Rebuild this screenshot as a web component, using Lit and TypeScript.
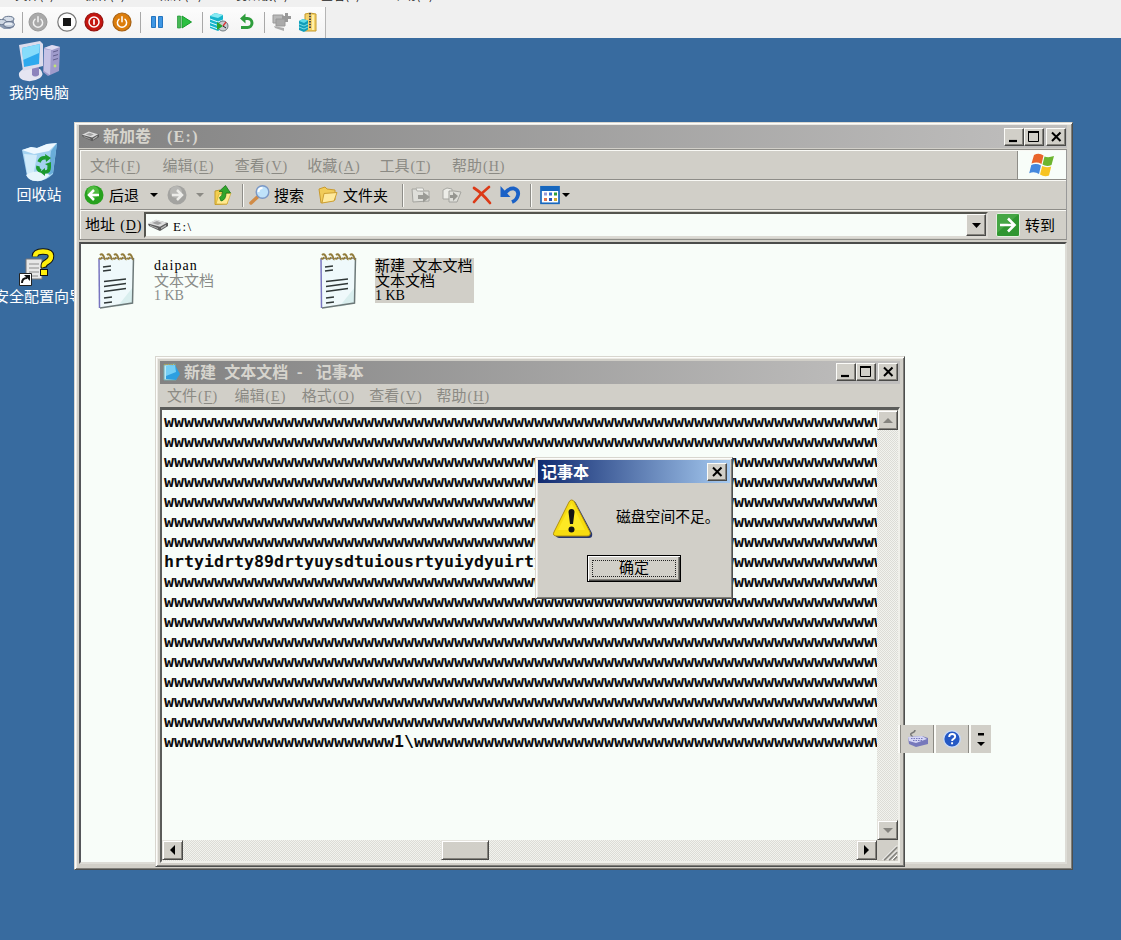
import { LitElement, html, css, svg, TemplateResult } from "lit";
import { customElement, property } from "lit/decorators.js";

const face = css`
  * { box-sizing: border-box; }
  :host { font-family: "Noto Sans CJK SC", sans-serif; font-size: 15px; line-height: 15px; color: #000; }
  svg { display: block; flex: none; overflow: visible; }
  .m { font-family: "Liberation Serif", serif; font-size: 14px; line-height: 1; }
  u { text-decoration-thickness: 1px; text-underline-offset: 2px; }
`;

const icon = (w: number, h: number, body: TemplateResult, cls = "") =>
  html`<svg class=${cls} width=${w} height=${h} viewBox="0 0 ${w} ${h}">${body}</svg>`;

const power = svg`<path d="M7 7.2a4.6 4.6 0 1 0 6 0M10 4.8v5" fill="none" stroke="#fff" stroke-width="1.5" stroke-linecap="round"/>`;

const hostIcons = {
  disks: icon(15, 20, svg`<path d="M1 8l4-3 6-1 3 2v9l-4 2H4l-5-3V9z" fill="#8a99b0"/><ellipse cx="8.500" cy="7" rx="5.500" ry="2.700" fill="#d5dde8" stroke="#6d7b92"/><ellipse cx="1.500" cy="10" rx="5" ry="2.500" fill="#cfd8e4" stroke="#6d7b92"/><ellipse cx="9" cy="12.500" rx="5.500" ry="3" fill="#c3cedd" stroke="#66738c"/><path d="M5 12h7" stroke="#f3f6fa" stroke-width="1.500"/>`),
  off: icon(20, 20, svg`<circle cx="10" cy="10" r="9" fill="#a9a9a9" stroke="#999"/><g opacity=".85">${power}</g>`),
  stop: icon(20, 20, svg`<circle cx="10" cy="10" r="9.2" fill="#fdfdfd" stroke="#777" stroke-width="1.2"/><rect x="6" y="6" width="8" height="8" fill="#161616"/>`),
  shut: icon(20, 20, svg`<circle cx="10" cy="10" r="9" fill="#c4150f" stroke="#94100c" stroke-width="1.2"/><circle cx="10" cy="10" r="5" fill="none" stroke="#fff" stroke-width="1.5"/><path d="M10 7.3v5.4" stroke="#fff" stroke-width="1.7"/>`),
  save: icon(20, 20, svg`<circle cx="10" cy="10" r="9" fill="#dc7d0b" stroke="#a66012" stroke-width="1.2"/>${power}`),
  pause: icon(12, 14, svg`<path d="M.5 1.500h4v11h-4zM7.500 1.500h4v11h-4z" fill="#3f97e4" stroke="#2475c0"/>`),
  play: icon(16, 14, svg`<path d="M.5 1h3v12h-3z" fill="#46b955" stroke="#1e9433" stroke-width=".7"/><path d="M5 1l9.500 6L5 13z" fill="#2cc042" stroke="#169a2a"/>`),
  snap: icon(20, 20, svg`<path d="M1 4l5-3 8 2v13l-5 3-8-3z" fill="#17b4cb"/><path d="M1 4l5-3 8 2-5 3z" fill="#86eaf3"/><path d="M1 7l8 3 5-2M1 10.500l8 3 5-2M1 14l8 3" stroke="#dffbff" fill="none"/><circle cx="14" cy="14" r="5" fill="#c9cdd0" stroke="#6f7b80"/><path d="M8 10v8l6-4z" fill="#29a52c"/><path d="M14 14l3-4" stroke="#d33" stroke-width="1.300"/><path d="M14 14l3 2" stroke="#222"/>`),
  revert: icon(14, 18, svg`<path d="M3 5.500h4.500a4.500 4.500 0 0 1 0 9H1" fill="none" stroke="#2e9d3c" stroke-width="3"/><path d="M0 5.500L5.500.5v10z" fill="#2e9d3c"/>`),
  grey: icon(20, 20, svg`<path d="M1 3h10v8H1z" fill="#b9b9b9" stroke="#9a9a9a"/><path d="M4 7h9v7H4z" fill="#aaa" stroke="#989898"/><path d="M2 14l10 2v3l-9-3z" fill="#adadad"/><path d="M14.500 1v9M10 5.500h9" stroke="#999" stroke-width="3"/>`),
  zip: icon(18, 20, svg`<path d="M6 2l5-1 6 1v17H6z" fill="#f4d169" stroke="#c49a2c"/><path d="M14 3v15" stroke="#fff0a8" stroke-width="2"/><path d="M11 1v16" stroke="#4b4b4b" stroke-width="2" stroke-dasharray="1.500 1.200"/><path d="M0 9l4-2 5 1.500v9L5 20l-5-2z" fill="#119db8"/><path d="M0 9l4-2 5 1.500L5 11z" fill="#5edbe8"/><path d="M0 12l5 2 4-2M0 15l5 2 4-2" stroke="#8eeaf3" fill="none" stroke-width=".8"/>`),
};

const drive = (w: number) => html`<svg width=${w} height=${w * 0.6} viewBox="0 0 20 12"><path d="M0 5l8-4 12 3v3l-8 5-11-5z" fill="#5c5c5c"/><path d="M0 4.500l8-4 11 3.200-7 4z" fill="#dedede"/><path d="M4 4l5-2 5 2-4 2z" fill="#a1a1a1"/><path d="M13 8.700l5-3v1.500l-5 3z" fill="#bbb"/><path d="M2 6.500l8 3" stroke="#aaa"/></svg>`;

const noteFile = icon(38, 56, svg`<path d="M2 5l35-1-1.500 46L3 55z" fill="#eff9fb"/><path d="M20 54l16-20-.5 16z" fill="#d9eeee"/><path d="M2 5.500L2.500 55" stroke="#7774bf" stroke-width="1.500"/><path d="M2 5.500h34" stroke="#8f93ad"/><path d="M36.500 5l-1 45L3 55" fill="none" stroke="#6c7878" stroke-width="1.500"/><g fill="none" stroke="#927c3a" stroke-width="1.900">${[4, 11, 18, 25, 32].map((x) => svg`<path d="M${x - 1} 2q2-2 3.500 1t1 4M${x - 2} 5q2 2 3-1"/>`)}</g><path d="M6 14l8-1M6 18l8-1M7 28.500l22-2.500M7 33.500l22-3M7 38.500l22-3M7 45l8-1M7 50l8-1" stroke="#2f3737" stroke-width="1.600"/>`);

const desk = {
  pc: icon(42, 42, svg`<path d="M26 7l8-3 8 2-1 24-11 5-5-4z" fill="#9f9bcb"/><path d="M26 7l8-3 8 2-8 3z" fill="#dedcf2"/><path d="M33 9l-1 25-6-4V8z" fill="#c6c3e6"/><path d="M35 11l5-1.500M35 15l5-1.500M35 19l5-1.500" stroke="#63608f"/><circle cx="37" cy="25" r="1.400" fill="#bfe573"/><path d="M1 32q4-6 12-5l9 1q5 5 0 9-8 5-17 2-5-2-4-7z" fill="#e5e5f2"/><path d="M14 25h7v9q-4 3-7 0z" fill="#8d84bd"/><path d="M1 4l21-4 3 3v22L5 30z" fill="#dcdcec"/><path d="M4 7l18-4-1 20-15 3z" fill="#2ea9ee"/><path d="M4 7l18-4-1 9L5 19z" fill="#86dcfb"/>`),
  bin: icon(37, 40, svg`<path d="M1 8l9-3 6 1 10-4 10-1-4 31q-8 8-18 7-6-1-8-5z" fill="#a4d2f0"/><path d="M1 8l9-3 6 1 10-4 10-1-8 8-15 3z" fill="#eef8ff"/><path d="M3 12l13 1-4 22q-5-1-6-4z" fill="#d1ebfa"/><path d="M30 9l-3 25 5-3 4-30z" fill="#69add9"/><path d="M5 33q10-7 24 0-7 7-14 6-7 0-10-6z" fill="#e7f5fc"/><g fill="none" stroke="#1c9a2e" stroke-width="3.500"><path d="M18 20q2-5 7-4"/><path d="M28 24q1 6-4 6"/><path d="M20 29q-4-1-3-5"/></g><path d="M24 12l6 4-5 4zM24 26v8l-5-4zM24 22l6-2 0 6z" fill="#1c9a2e"/>`),
  wiz: icon(36, 38, svg`<path d="M7 11h16v20H7z" fill="#e7e7e7" stroke="#777"/><path d="M10 16h10M10 20h10M10 24h10M10 28h9" stroke="#8d8d8d"/><path d="M16 8.500q0-5 8-5t8 4.500q0 4-4 6T25 20" fill="none" stroke="#111" stroke-width="6.500"/><path d="M21 21h8v7h-8z" fill="#111"/><path d="M16 8.500q0-5 8-5t8 4.500q0 4-4 6T25 19" fill="none" stroke="#ffef0c" stroke-width="4.500"/><path d="M22 22h6v5h-6z" fill="#ffef0c"/><path d="M.5 25.500h12v12H.5z" fill="#fff" stroke="#222"/><path d="M3 35q0-5 5-5" stroke="#111" stroke-width="2" fill="none"/><path d="M5 27h6v6z" fill="#111"/>`),
};

const tool = {
  back: icon(20, 20, svg`<circle cx="10" cy="10" r="9.500" fill="#27a11e"/><circle cx="9" cy="7" r="6" fill="#66c951" opacity=".65"/><path d="M15 10H6M10 5l-5 5 5 5" fill="none" stroke="#fff" stroke-width="2.500"/>`),
  fwd: icon(20, 20, svg`<circle cx="10" cy="10" r="9.500" fill="#a3a3a0"/><circle cx="9" cy="7" r="6" fill="#c1c1be" opacity=".65"/><path d="M5 10h9M10 5l5 5-5 5" fill="none" stroke="#ecece9" stroke-width="2.500"/>`),
  up: icon(18, 20, svg`<path d="M1 6l5-1 2 2h7l-2 12-12 .5z" fill="#f2cf4e" stroke="#c39b2d"/><path d="M2 19L5 9l12-1-4 11z" fill="#ffe98f" stroke="#d4ab34" stroke-width=".7"/><path d="M7 16q5-1 5-8h4.500L11.500.5 5 6.500h3.500q0 5-3 6z" fill="#31a62b" stroke="#197319" stroke-width=".8"/>`),
  search: icon(20, 20, svg`<path d="M1 18l6.500-6" stroke="#d18b46" stroke-width="3.500" stroke-linecap="round"/><circle cx="12.500" cy="7" r="6.300" fill="#bfe2fa" stroke="#7b98c6" stroke-width="1.400"/><path d="M8.500 7q0-4 4-4" stroke="#fff" stroke-width="2" fill="none"/>`),
  folder: icon(20, 18, svg`<path d="M1 3l6-2 2 2 8 1v10L3 17z" fill="#f1cc59" stroke="#c99a2e"/><path d="M4 17L6 7.500l13-1L16 15z" fill="#ffea9d" stroke="#cda033"/>`),
  move: icon(20, 18, svg`<path d="M1 3h6l2 2h9v10L2 16z" fill="#deded9" stroke="#a4a49f"/><path d="M5 2h7l1 3H6z" fill="#f0f0ec" stroke="#b0b0ab"/><path d="M7 9h5V6l7 5-7 5.500V13H7z" fill="#9b9b96"/>`),
  copy: icon(20, 18, svg`<path d="M1 4l4-2 5 1v10H1z" fill="#ededE8" stroke="#a7a7a2"/><path d="M7 5h5l7 1-4 10H7z" fill="#deded9" stroke="#a4a49f"/><path d="M8 9h3V6l5 4-5 5v-3H8z" fill="#969691"/>`),
  del: icon(20, 18, svg`<path d="M2 2q8 5 16 15M17 1Q8 8 2 16" fill="none" stroke="#dc3a17" stroke-width="2.700" stroke-linecap="round"/>`),
  undo: icon(20, 18, svg`<path d="M5 7q4-5 9-4.500 5 1.500 4 6.500-1 5-6 7" fill="none" stroke="#1a61c6" stroke-width="3.800"/><path d="M.5 0v11h10z" fill="#1a61c6"/>`),
  view: icon(20, 18, svg`<rect x="1" y=".8" width="18" height="16.500" fill="#fff" stroke="#1767be" stroke-width="1.700"/><path d="M1 1h18v4H1z" fill="#1767be"/>${["#9a9ad6", "#3572d6", "#31a03a", "#e2744d", "#2752b4", "#d2ac2d"].map((c, i) => svg`<rect x=${4 + (i % 3) * 5} y=${6.5 + Math.floor(i / 3) * 5.5} width="3" height="3" fill=${c}/>`)}`),
  flag: icon(26, 24, svg`<path d="M5 2q5-2.500 9.500.5L12.500 11Q8 8.500 2.500 10.500z" fill="#e9652b"/><path d="M15.500 3.500q4 1.500 9.500-.5L22.500 12q-5 2-9-.5z" fill="#6cb52f"/><path d="M2.300 12q5-2 9.700.5L10 21q-4.500-3-9.800-.8z" fill="#4588dd"/><path d="M13.200 13q4 2 9 .5L20 22.500q-4.500 2-9-1z" fill="#f7c322"/>`),
  go: icon(24, 24, svg`<rect x=".5" y=".5" width="23" height="23" rx="1.500" fill="#2f9630" stroke="#e4efdf"/><path d="M1 1h22L1 20z" fill="#5bb557" opacity=".5"/><path d="M4 12h14M12 5.500l6.500 6.500-6.500 6.500" stroke="#fff" stroke-width="2.600" fill="none"/>`),
  pad: icon(17, 18, svg`<path d="M1 2l11-1 1 16H1z" fill="#b9e9f7" stroke="#7aa"/><path d="M3 3l9-1 5 9-4 6-10-1z" fill="#2d9fe0"/><path d="M3 3l9-1 1 7-10 4z" fill="#75cff5"/><path d="M1 1.500h11" stroke="#b8a04a" stroke-dasharray="1.500 1"/>`),
};

const arrow = (color = "#000", cls = "") => icon(8, 4, svg`<path d="M0 0h8L4 4z" fill=${color}/>`, cls);

/** Caption buttons: minimise, maximise and close. */
@customElement("caption-buttons")
class CaptionButtons extends LitElement {
  @property({ type: Boolean }) only = false;
  static styles = [face, css`
    :host { display: flex; height: 18px; margin-left: auto; }
    .b { width: 20px; height: 18px; background: #d1cfc8; border: 1px solid; border-color: #fbfbf8 #4a4a48 #4a4a48 #fbfbf8; box-shadow: inset -1px -1px #85837d; }
    .c { margin-left: 2px; }
  `];
  render() {
    return html`
      ${this.only ? "" : html`
        <div class="b">${icon(18, 16, svg`<path d="M4 12h8" stroke="#000" stroke-width="2.200"/>`)}</div>
        <div class="b">${icon(18, 16, svg`<path d="M3.500 3h10v9.500h-10z" fill="none" stroke="#000"/><path d="M3 3h11" stroke="#000" stroke-width="2"/>`)}</div>`}
      <div class="b ${this.only ? "" : "c"}">${icon(18, 16, svg`<path d="M5 3.500l8.500 8.500M13.500 3.500L5 12" stroke="#000" stroke-width="2"/>`)}</div>`;
  }
}

const frame = css`
  .win { background: #d1cfc8; border: 1px solid; border-color: #d8d6cf #4d4f4e #4d4f4e #d8d6cf; box-shadow: inset 1px 1px #fdfdfb, inset -1px -1px #7f7e79, inset 2px 2px #eceae4; display: flex; flex-direction: column; }
  .title { display: flex; align-items: center; flex: none; font-weight: 700; font-size: 16px; color: #d6d4cd; background: linear-gradient(90deg, #828282, #c0bfbe); white-space: pre; }
  .title > span { margin-top: -1px; }
  .title .m { font-size: 16px; letter-spacing: 1.300px; }
  .menu { display: flex; align-items: center; color: #8b8a84; white-space: pre; }
  .menu span { flex: none; }
  .menu .m { margin-left: 1px; letter-spacing: 1px; }
`;

const menuItem = ([t, k]: string[]) => html`<span class="mi">${t}<span class="m">(<u>${k}</u>)</span></span>`;

@customElement("explorer-window")
class ExplorerWindow extends LitElement {
  static styles = [face, frame, css`
    :host { display: block; }
    .win { width: 999px; height: 748px; padding: 2px 5px 5px 4px; }
    .title { height: 23px; padding: 0 1px 0 3px; }
    .title svg { margin-right: 4px; }
    .bars { flex: none; height: 91px; margin-top: 1px; border: 1px solid #8e8d88; border-right-color: #999; display: flex; flex-direction: column; }
    .row { display: flex; align-items: center; border-top: 1px solid #f9f9f5; border-bottom: 1px solid #8e8d88; border-left: 1px solid #f9f9f5; flex: none; }
    .menu { height: 30px; padding-left: 9px; }
    .menu .mi { width: 72.4px; }
    .logo { margin-left: auto; width: 49px; height: 28px; background: #f8fdf9; border-left: 1px solid #8e8d88; display: flex; align-items: center; justify-content: center; }
    .tools { height: 30px; padding-left: 3px; }
    .tools > * { flex: none; }
    .t { margin-top: -2px; margin-left: 5px; }
    .sep { width: 2px; height: 23px; border-left: 1px solid #8e8d88; border-right: 1px solid #f9f9f5; }
    .g4 { margin-left: 4px; } .g6 { margin-left: 6px; } .g7 { margin-left: 7px; } .g8 { margin-left: 8px; } .g10 { margin-left: 10px; } .g11 { margin-left: 11px; } .g14 { margin-left: 14px; } .g2 { margin-left: 2px; } .g9 { margin-left: 9px; }
    .addr { height: 29px; border-bottom: 0; padding-left: 4px; }
    .label { width: 59px; flex: none; margin-top: -2px; white-space: nowrap; }
    .label .m { letter-spacing: .8px; margin-left: 1px; }
    .combo { width: 844px; height: 26px; background: #f8fdf9; border: 2px solid; border-color: #55554f #dcdad4 #dcdad4 #55554f; display: flex; align-items: center; padding-left: 2px; }
    .combo .m { margin-left: 5px; margin-top: 2px; letter-spacing: 1.500px; font-size: 13px; }
    .drop { margin-left: auto; width: 20px; height: 22px; background: #d1cfc8; border: 1px solid; border-color: #fbfbf8 #4a4a48 #4a4a48 #fbfbf8; box-shadow: inset -1px -1px #85837d; display: flex; align-items: center; justify-content: center; }
    .go { margin-left: 8px; }
    .files { flex: 1; margin-top: 2px; background: #f8fdf9; border: 2px solid; border-color: #4b4c4b #dddcd6 #dddcd6 #55565a; display: flex; align-items: flex-start; padding: 9px 0 0 16px; }
    .f { width: 222px; display: flex; align-items: flex-start; }
    .lines { margin: 5px 0 0 19px; height: 45px; white-space: pre; display: grid; grid-template-rows: repeat(3, 15px); }
    .lines div { height: 15px; line-height: 14px; }
    .lines .m { line-height: 16px; }
    .name { letter-spacing: 1.100px; }
    .dim { color: #888b88; }
    .sel { background: #d1cfc8; margin-left: 18px; width: 99px; }
  `];
  render() {
    const items = [["文件", "F"], ["编辑", "E"], ["查看", "V"], ["收藏", "A"], ["工具", "T"], ["帮助", "H"]];
    return html`<div class="win">
      <div class="title">${drive(17)}<span>新加卷<span class="m">   (E:)</span></span><caption-buttons></caption-buttons></div>
      <div class="bars">
        <div class="row menu">${items.map(menuItem)}<div class="logo">${tool.flag}</div></div>
        <div class="row tools">
          ${tool.back}<span class="t">后退</span>${arrow("#000", "g11")}<span class="g9">${tool.fwd}</span>${arrow("#8b8a84", "g9")}<span class="g10">${tool.up}</span>
          <i class="sep g10"></i><span class="g6">${tool.search}</span><span class="t g4">搜索</span><span class="g14">${tool.folder}</span><span class="t">文件夹</span>
          <i class="sep g14"></i><span class="g7">${tool.move}</span><span class="g11">${tool.copy}</span><span class="g10">${tool.del}</span><span class="g8">${tool.undo}</span>
          <i class="sep g10"></i><span class="g8">${tool.view}</span>${arrow("#000", "g2")}
        </div>
        <div class="row addr"><span class="label">地址<span class="m"> (<u>D</u>)</span></span>
          <div class="combo">${drive(20)}<span class="m">E:\\</span><div class="drop">${icon(9, 5, svg`<path d="M0 0h9L4.500 5z"/>`)}</div></div>
          <div class="go">${tool.go}</div><span class="t">转到</span></div>
      </div>
      <div class="files">
        <div class="f">${noteFile}<div class="lines"><div class="m name">daipan</div><div class="dim">文本文档</div><div class="dim m">1 KB</div></div></div>
        <div class="f">${noteFile}<div class="lines sel"><div>新建<span style="letter-spacing:4px"> </span>文本文档</div><div>文本文档</div><div class="m">1 KB</div></div></div>
      </div>
    </div>`;
  }
}

@customElement("notepad-window")
class NotepadWindow extends LitElement {
  static styles = [face, frame, css`
    :host { display: block; }
    .win { width: 750px; height: 511px; padding: 4px 4px 3px 4px; }
    .title { height: 23px; padding: 0 2px 1px 3px; }
    .title svg { margin-right: 4px; }
    .menu { height: 23px; padding-left: 7px; flex: none; }
    .menu .mi { width: 67.4px; }
    .sp { letter-spacing: 4.700px; }
    .edit { flex: 1; min-height: 0; border: 2px solid; border-color: #5b5c5a #f0f0ea #f0f0ea #5b5c5a; border-top-width: 3px; display: grid; grid-template: minmax(0, 1fr) 21px / minmax(0, 1fr) 21px; }
    .text { background: #f8fdf9; overflow: hidden; padding: 2px 0 0 2px; white-space: pre; font: 700 16.610px/20px "DejaVu Sans Mono", monospace; color: #0b0b0b; }
    .sb { background: repeating-conic-gradient(#dcdcd6 0 25%, #f2f3ee 0 50%) 0 0 / 2px 2px; display: flex; }
    .v { flex-direction: column; justify-content: space-between; }
    .b { width: 21px; height: 20px; background: #d1cfc8; border: 1px solid; border-color: #e5e3dd #4a4a48 #4a4a48 #e5e3dd; box-shadow: inset 1px 1px #fff, inset -1px -1px #85837d; display: flex; align-items: center; justify-content: center; flex: none; }
    .thumb { width: 48px; margin-left: 258px; }
    .end { margin-left: auto; }
    .grip { background: #d1cfc8; }
  `];
  render() {
    const items = [["文件", "F"], ["编辑", "E"], ["格式", "O"], ["查看", "V"], ["帮助", "H"]];
    const w = (n: number) => "w".repeat(n);
    const lines = Array.from({ length: 17 }, (_, i) =>
      i === 7 ? "hrtyidrty89drtyuysdtuiousrtyuiydyuirty" + w(37) : i === 16 ? w(23) + "1\\" + w(50) : w(75));
    return html`<div class="win">
      <div class="title">${tool.pad}<span>新建<span class="sp"> </span>文本文档<span class="sp"> - </span>记事本</span><caption-buttons></caption-buttons></div>
      <div class="menu">${items.map(menuItem)}</div>
      <div class="edit">
        <div class="text">${lines.join("\n")}</div>
        <div class="sb v"><div class="b">${icon(10, 5, svg`<path d="M0 5h10L5 0z" fill="#85847f"/>`)}</div><div class="b">${icon(10, 5, svg`<path d="M0 0h10L5 5z" fill="#85847f"/>`)}</div></div>
        <div class="sb"><div class="b">${icon(5, 10, svg`<path d="M5 0v10L0 5z"/>`)}</div><div class="b thumb"></div><div class="b end">${icon(5, 10, svg`<path d="M0 0v10l5-5z"/>`)}</div></div>
        <div class="grip">${icon(21, 21, svg`<path d="M7 20L20 7M12 20l8-8M16.500 20l3.500-3.500" stroke="#85847f" stroke-width="1.800"/><path d="M5.500 20L20 5.500M10.500 20l9.500-9.500M15 20l5-5" stroke="#fff"/>`)}</div>
      </div>
    </div>`;
  }
}

@customElement("alert-dialog")
class AlertDialog extends LitElement {
  static styles = [face, frame, css`
    :host { display: block; }
    .win { width: 198px; height: 142px; padding: 2px 2px 3px 2px; }
    .title { height: 23px; color: #fff; background: linear-gradient(90deg, #102a70, #a6caf0); padding: 0 3px 0 3px; }
    .body { display: flex; align-items: center; padding: 14px 0 0 15px; height: 56px; white-space: nowrap; font-size: 14.800px; }
    .body span { margin: -6px 0 0 23px; }
    .ok { margin: 16px 0 0 49px; width: 94px; height: 27px; border: 1px solid #000; background: #d1cfc8; box-shadow: inset 1px 1px #fff, inset -1px -1px #4a4a48, inset -2px -2px #85837d; padding: 4px; }
    .ok div { border: 1px dotted #222; height: 17px; text-align: center; line-height: 12px; }
  `];
  render() {
    return html`<div class="win">
      <div class="title"><span>记事本</span><caption-buttons only></caption-buttons></div>
      <div class="body">${icon(40, 41, svg`<path d="M20 3q2 0 3 2l16 30q1 5-3 5H6q-5-1-3-5z" fill="#26356e"/><path d="M18.500 2q2 0 3 2L37 34q1 4-3 4H4q-5 0-3-4L16 4q1-2 2.500-2z" fill="#f7dc10" stroke="#b08f10"/><path d="M18.500 5L5 32l27 0z" fill="#ffee2e" opacity=".7"/><path d="M15.500 14q0-3 3-3t3 3L20 26h-3z" fill="#141414"/><circle cx="18.500" cy="31.500" r="3" fill="#141414"/>`)}<span>磁盘空间不足。</span></div>
      <div class="ok"><div>确定</div></div>
    </div>`;
  }
}

@customElement("app-root")
class AppRoot extends LitElement {
  static styles = [face, css`
    :host { display: block; }
    .screen { width: 1121px; height: 940px; overflow: hidden; background: #386b9f; display: flex; flex-direction: column; }
    .host { height: 38px; flex: none; background: #f0f0f0; }
    .hm { height: 7px; overflow: hidden; display: flex; align-items: flex-end; white-space: nowrap; font-size: 12px; line-height: 12px; color: #222; }
    .hm span { flex: none; margin-bottom: 6px; text-align: right; }
    .ht { height: 31px; width: 326px; padding-bottom: 1px; background: linear-gradient(#fcfcfc, #f3f3f3); border-right: 1px solid #b5b5b5; display: flex; align-items: center; }
    .ht > * { flex: none; }
    .sep { width: 1px; height: 21px; background: #a8a8a8; }
    .desk { flex: 1; position: relative; overflow: hidden; }
    .at { position: absolute; }
    .ic { width: 100px; display: flex; flex-direction: column; align-items: center; color: #fff; white-space: nowrap; }
    .ic span { margin-top: 1px; }
    .a { left: -11px; top: 3px; } .b { left: -11px; top: 104px; } .c { left: -11px; top: 210px; }
    .b span { margin-top: 4px; } .c svg { margin-right: 4px; } .c span { margin-top: 2px; }
    .e { left: 74px; top: 84px; } .n { left: 155px; top: 318px; } .d { left: 535px; top: 419px; }
    .lang { left: 898px; top: 687px; height: 28px; width: 93px; background: #d1cfc8; display: grid; grid-template-columns: 36px 35px 22px; }
    .lang > div { display: flex; align-items: center; justify-content: center; }
    .lang .k { border-left: 2px solid #fafaf6; border-right: 1px solid #8b8a84; box-shadow: inset 1px 0 #8b8a84; padding-left: 3px; }
    .lang .q { border-left: 2px solid #fafaf6; border-right: 1px solid #8b8a84; }
    .lang .o { border-left: 2px solid #fafaf6; }
  `];
  render() {
    const h = hostIcons;
    const gap = (n: number) => html`<i style="width:${n}px"></i>`;
    const menus: [string, number][] = [["文件(F)", 54], ["操作(A)", 71], ["媒体(M)", 77], ["剪贴板(C)", 86], ["查看(V)", 72], ["帮助(H)", 73]];
    return html`<div class="screen">
      <div class="host">
        <div class="hm">${menus.map(([t, n]) => html`<span style="width:${n}px">${t}</span>`)}</div>
        <div class="ht">
          ${h.disks}${gap(7)}<i class="sep"></i>${gap(5)}${h.off}${gap(9)}${h.stop}${gap(7)}${h.shut}${gap(8)}${h.save}${gap(8)}<i class="sep"></i>
          ${gap(10)}${h.pause}${gap(14)}${h.play}${gap(9)}<i class="sep"></i>${gap(6)}${h.snap}${gap(11)}${h.revert}${gap(10)}<i class="sep"></i>${gap(7)}${h.grey}${gap(7)}${h.zip}
        </div>
      </div>
      <div class="desk">
        <div class="at ic a">${desk.pc}<span>我的电脑</span></div>
        <div class="at ic b">${desk.bin}<span>回收站</span></div>
        <div class="at ic c">${desk.wiz}<span>安全配置向导</span></div>
        <explorer-window class="at e"></explorer-window>
        <notepad-window class="at n"></notepad-window>
        <alert-dialog class="at d"></alert-dialog>
        <div class="at lang">
          <div class="k">${icon(22, 18, svg`<path d="M6 7Q2 4 5 3t3-3" fill="none" stroke="#777" stroke-width="1.500"/><path d="M1 7l14-1 6 2v6l-12 3-7-3z" fill="#7779bb"/><path d="M1 7l14-1 5 3-11 4-7-2z" fill="#d5d6f5"/><path d="M4 8.500h12M6 10.500h10" stroke="#7779bb" stroke-dasharray="1.500 1"/>`)}</div>
          <div class="q">${icon(18, 18, svg`<circle cx="9" cy="9" r="8.300" fill="#2458c4" stroke="#c9daf6" stroke-width="1.400"/><path d="M6.200 7q0-3 3-3t3 2.600q0 1.500-1.600 2.300T9.100 11M9.100 12.300v2" fill="none" stroke="#fff" stroke-width="1.900"/>`)}</div>
          <div class="o">${icon(8, 14, svg`<path d="M1 1h6v2.500H1zM0 10h8l-4 4z"/>`)}</div>
        </div>
      </div>
    </div>`;
  }
}
